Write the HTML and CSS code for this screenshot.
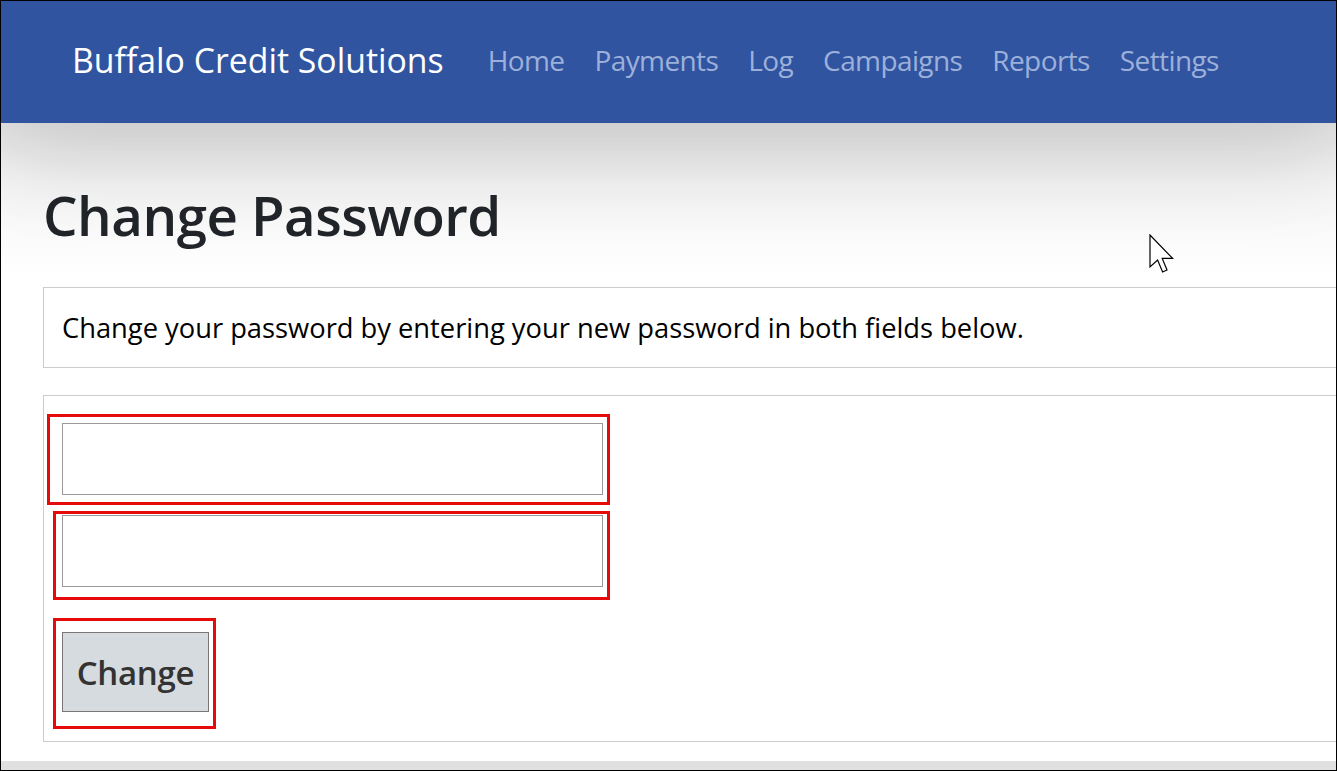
FILE: index.html
```html
<!DOCTYPE html>
<html lang="en">
<head>
<meta charset="utf-8">
<title>Change Password - Buffalo Credit Solutions</title>
<link rel="stylesheet" href="styles.css">
</head>
<body>
<div class="frame">
  <header class="navbar">
    <a class="brand" href="#">Buffalo Credit Solutions</a>
    <nav class="nav">
      <a href="#">Home</a>
      <a href="#">Payments</a>
      <a href="#">Log</a>
      <a href="#">Campaigns</a>
      <a href="#">Reports</a>
      <a href="#">Settings</a>
    </nav>
  </header>
  <main class="main">
    <h1 class="title">Change Password</h1>
    <div class="card intro">Change your password by entering your new password in both fields below.</div>
    <form class="card form">
      <input class="field" type="password" aria-label="New password">
      <input class="field" type="password" aria-label="Confirm password">
      <button class="btn" type="button">Change</button>
      <span class="mark mark-1"></span>
      <span class="mark mark-2"></span>
      <span class="mark mark-3"></span>
    </form>
    <svg class="cursor" width="26" height="40" viewBox="0 0 13 20" aria-hidden="true">
      <path d="M0.5 0.5 L0.5 16.5 L4.3 13 L6.8 19 L9 18 L6.6 12.2 L11.8 12.2 Z" fill="#fff" stroke="#000" stroke-width="0.6" stroke-linejoin="miter"/>
    </svg>
  </main>
  <footer class="footer"></footer>
</div>
</body>
</html>
```

FILE: styles.css
```css
* { box-sizing: border-box; }

html, body {
  margin: 0;
  padding: 0;
  background: #fff;
}

body {
  font-family: "Open Sans", "Noto Sans", sans-serif;
}

.frame {
  width: 1337px;
  height: 771px;
  border: 1px solid #000;
  display: flex;
  flex-direction: column;
  overflow: hidden;
  background: #fff;
}

.navbar {
  flex: none;
  height: 122px;
  background: #3054a0;
  display: flex;
  align-items: center;
  padding-left: 71px;
  padding-bottom: 4px;
  box-shadow: 0 40px 90px rgba(0, 0, 0, 0.11);
  position: relative;
  z-index: 1;
}

.brand {
  color: #fff;
  text-decoration: none;
  font-size: 33.8px;
  margin-right: 44px;
}

.nav {
  display: flex;
  gap: 30px;
}

.nav a {
  color: #9db0da;
  text-decoration: none;
  font-size: 28px;
  letter-spacing: -0.6px;
}

.main {
  flex: 1;
  position: relative;
  padding: 0 0 0 42px;
  background: linear-gradient(#e4e4e4 0px, #f4f4f4 60px, #fff 150px);
}

.title {
  margin: 52px 0 0 0;
  height: 112px;
  font-size: 54.6px;
  font-weight: 600;
  color: #212529;
  line-height: 80px;
  letter-spacing: -0.5px;
}

.card {
  border: 1px solid #cccccc;
  border-right: none;
  background: #fff;
}

.intro {
  height: 81px;
  padding: 21px 0 0 18px;
  font-size: 27.3px;
  color: #000;
}

.form {
  position: relative;
  margin-top: 27px;
  height: 347px;
  padding: 27px 0 0 18px;
  display: flex;
  flex-direction: column;
  align-items: flex-start;
}

.field {
  width: 541px;
  height: 72px;
  border: 1px solid #999;
  background: #fff;
  margin: 0;
}

.field + .field {
  margin-top: 20px;
}

.btn {
  margin-top: 45px;
  width: 147px;
  height: 80px;
  background: #d5dbde;
  border: 1px solid #777;
  border-radius: 0;
  color: #333;
  font-family: "Open Sans", "Noto Sans", sans-serif;
  font-size: 33px;
  font-weight: 600;
  padding: 0;
  letter-spacing: -0.3px;
}

.mark {
  position: absolute;
  border: 3px solid #e60a0a;
}

.mark-1 { left: 3px;  top: 18px;  width: 563px; height: 91px; }
.mark-2 { left: 9px;  top: 115px; width: 557px; height: 89px; }
.mark-3 { left: 9px;  top: 222px; width: 163px; height: 111px; }

.cursor {
  position: absolute;
  left: 1148px;
  top: 111px;
}

.footer {
  flex: none;
  height: 9px;
  background: #e0e0e0;
}
```
